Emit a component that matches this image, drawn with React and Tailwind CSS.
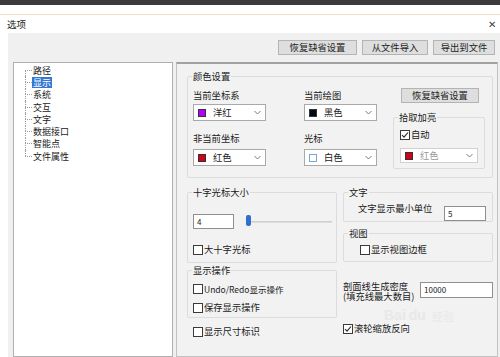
import React from "react";

const Chevron = () => (
  <svg width="7" height="5" viewBox="0 0 7 5" className="shrink-0">
    <polyline points="0.5,1 3.5,4 6.5,1" fill="none" stroke="#7a7a7a" strokeWidth="1" />
  </svg>
);

const Select = ({ color, label, swatchBorder = "#333", disabled = false, w = "w-[73px]", h = "h-[17px]" }) => (
  <div className={`${w} ${h} border ${disabled ? "border-[#d0d0d0]" : "border-[#a9a9a9]"} bg-white flex items-center pl-[4px] pr-[4px]`}>
    <div className="w-[8px] h-[8px] shrink-0" style={{ background: color, border: `1px solid ${swatchBorder}` }} />
    <span className={`ml-[7px] flex-1 ${disabled ? "text-[#9a9a9a]" : "text-[#1a1a1a]"}`}>{label}</span>
    <Chevron />
  </div>
);

const Check = ({ checked, label, className = "" }) => (
  <div className={`flex items-center h-[12px] ${className}`}>
    <div className="w-[10px] h-[10px] border border-[#3a3a3a] bg-white shrink-0 flex items-center justify-center">
      {checked && (
        <svg width="8" height="8" viewBox="0 0 8 8">
          <polyline points="1,4 3,6.2 7,1.5" fill="none" stroke="#222" strokeWidth="1.1" />
        </svg>
      )}
    </div>
    <span className="ml-[1px] whitespace-nowrap">{label}</span>
  </div>
);

const Group = ({ title, className = "", children, legendClass = "ml-[4px]" }) => (
  <fieldset className={`border border-[#dcdcdc] rounded-[2px] ${className}`}>
    <legend className={`${legendClass} px-[1px] leading-[12px] text-[#1a1a1a]`}>{title}</legend>
    {children}
  </fieldset>
);

const Btn = ({ children, className = "" }) => (
  <div className={`h-[15px] border border-[#b4b4b4] bg-[#dedede] flex items-center justify-center text-[#222] ${className}`}>
    {children}
  </div>
);

const treeItems = ["路径", "显示", "系统", "交互", "文字", "数据接口", "智能点", "文件属性"];

export default function App() {
  return (
    <div className="w-[500px] h-[357px] overflow-hidden bg-white relative font-['Noto_Sans_CJK_SC','Noto_Sans',sans-serif] text-[9.3px] text-[#1a1a1a]">
      <div className="h-[5px] bg-[#3b3b3b]" />
      <div className="h-[9px] bg-white" />
      <div className="h-[1px] bg-[#ece1c5]" />
      <div className="h-[18px] flex items-center justify-between pl-[7px] pr-[4px] bg-white">
        <span className="text-[9.5px] leading-[12px]">选项</span>
        <span className="text-[10px] text-[#444] leading-[12px]">✕</span>
      </div>
      <div className="ml-[8px] h-[324px] bg-[#f0f0f0] flex flex-col">
        <div className="flex justify-end pt-[7px] pr-[5px] gap-[5px]">
          <Btn className="w-[79px]">恢复缺省设置</Btn>
          <Btn className="w-[66px]">从文件导入</Btn>
          <Btn className="w-[62px]">导出到文件</Btn>
        </div>
        <div className="flex mt-[7px] flex-1">
          <div className="ml-[5px] w-[160px] border border-[#b0b0b0] bg-white pt-[1px] pl-[11px]">
            {treeItems.map((t, i) => (
              <div key={t} className="flex h-[12.3px] items-stretch">
                <div className="w-[7px] flex flex-col shrink-0">
                  <div className={`flex-1 ${i > 0 ? "border-l border-dotted border-[#9a9a9a]" : ""}`} />
                  <div className={`flex-1 border-t border-dotted border-[#9a9a9a] ${i < treeItems.length - 1 ? "border-l" : ""}`} />
                </div>
                <div className="flex items-center">
                  <span className={`leading-[11px] text-[9px] px-[1px] ${i === 1 ? "bg-[#3577d4] text-white" : ""}`}>{t}</span>
                </div>
              </div>
            ))}
          </div>
          <div className="ml-[3px] w-[322px] border border-[#c2c2c2] border-t-2 border-t-[#a2a2a2] bg-[#f2f2f2] pl-[10px] pt-[6px]">
            <Group title="颜色设置" className="w-[306px] pb-[8px]" legendClass="ml-[4px]">
              <div className="flex">
                <div className="ml-[5px] w-[73px] flex flex-col">
                  <div className="mt-[7px] leading-[12px]">当前坐标系</div>
                  <div className="mt-[3px]"><Select color="#b300ff" label="洋红" /></div>
                  <div className="mt-[11px] leading-[12px]">非当前坐标</div>
                  <div className="mt-[5px]"><Select color="#d2001a" label="红色" /></div>
                </div>
                <div className="ml-[38px] w-[73px] flex flex-col">
                  <div className="mt-[7px] leading-[12px]">当前绘图</div>
                  <div className="mt-[3px]"><Select color="#000814" label="黑色" /></div>
                  <div className="mt-[11px] leading-[12px]">光标</div>
                  <div className="mt-[5px]"><Select color="#ffffff" swatchBorder="#7aa6d6" label="白色" /></div>
                </div>
                <div className="ml-[16px] w-[92px] flex flex-col">
                  <Btn className="ml-[8px] mt-[6px] w-[78px] h-[14px]">恢复缺省设置</Btn>
                  <Group title="拾取加亮" className="mt-[8px] w-[92px] pb-[5px]">
                    <Check checked label="自动" className="ml-[6px] mt-[6px]" />
                    <div className="ml-[6px] mt-[7px]">
                      <Select color="#d2001a" label="红色" disabled w="w-[78px]" h="h-[15px]" />
                    </div>
                  </Group>
                </div>
              </div>
            </Group>

            <div className="flex mt-[8px]">
              <div className="w-[150px] flex flex-col">
                <Group title="十字光标大小" className="w-[150px] pb-[6px]">
                  <div className="flex items-center mt-[16px] ml-[5px] h-[15px]">
                    <div className="w-[41px] h-[15px] border border-[#8f8f8f] bg-white flex items-center pl-[3px] text-[8px]">4</div>
                    <div className="ml-[12px] flex-1 mr-[4px] relative flex items-center h-[15px]">
                      <div className="w-full h-[2px] bg-[#dedede] border-t border-[#cfcfcf]" />
                      <div className="absolute left-0 top-[1px] w-[5px] h-[11px] rounded-[2px] bg-[#2f6fd0]" />
                    </div>
                  </div>
                  <Check label="大十字光标" className="ml-[5px] mt-[15px]" />
                </Group>
                <Group title="显示操作" className="w-[150px] mt-[1px] pb-[3px]">
                  <Check label="Undo/Redo显示操作" className="ml-[5px] mt-[7px] text-[8.5px]" />
                  <Check label="保存显示操作" className="ml-[5px] mt-[7px]" />
                </Group>
                <Check label="显示尺寸标识" className="ml-[6px] mt-[8px]" />
              </div>
              <div className="ml-[6px] w-[150px] flex flex-col">
                <Group title="文字" className="w-[150px]">
                  <div className="flex items-start mt-[4px]">
                    <span className="ml-[14px] leading-[12px]">文字显示最小单位</span>
                    <div className="ml-auto mr-[6px] mt-[4px] w-[42px] h-[15px] border border-[#8f8f8f] bg-white flex items-center pl-[3px] text-[8px]">5</div>
                  </div>
                </Group>
                <Group title="视图" className="w-[150px] mt-[5px] pb-[5px]">
                  <Check label="显示视图边框" className="ml-[16px] mt-[5px]" />
                </Group>
                <div className="flex items-start mt-[19px]">
                  <div className="leading-[10px] whitespace-nowrap">
                    <div>剖面线生成密度</div>
                    <div>(填充线最大数目)</div>
                  </div>
                  <div className="ml-auto w-[73px] h-[16px] mt-[1px] border border-[#8f8f8f] bg-white flex items-center pl-[3px] text-[8px]">10000</div>
                </div>
                <Check checked label="滚轮缩放反向" className="mt-[22px]" />
              </div>
            </div>
          </div>
        </div>
      </div>
      <div className="absolute left-[384px] top-[308px] flex items-end gap-[3px] pointer-events-none opacity-60 leading-none">
        <span className="text-[14px] font-bold text-[#e2e2e2] font-['Liberation_Sans',sans-serif]">Bai</span>
        <span className="text-[14px] font-bold text-[#e2e2e2] font-['Liberation_Sans',sans-serif]">du</span>
        <span className="text-[11px] text-[#e2e2e2] ml-[3px]">经验</span>
      </div>
    </div>
  );
}
